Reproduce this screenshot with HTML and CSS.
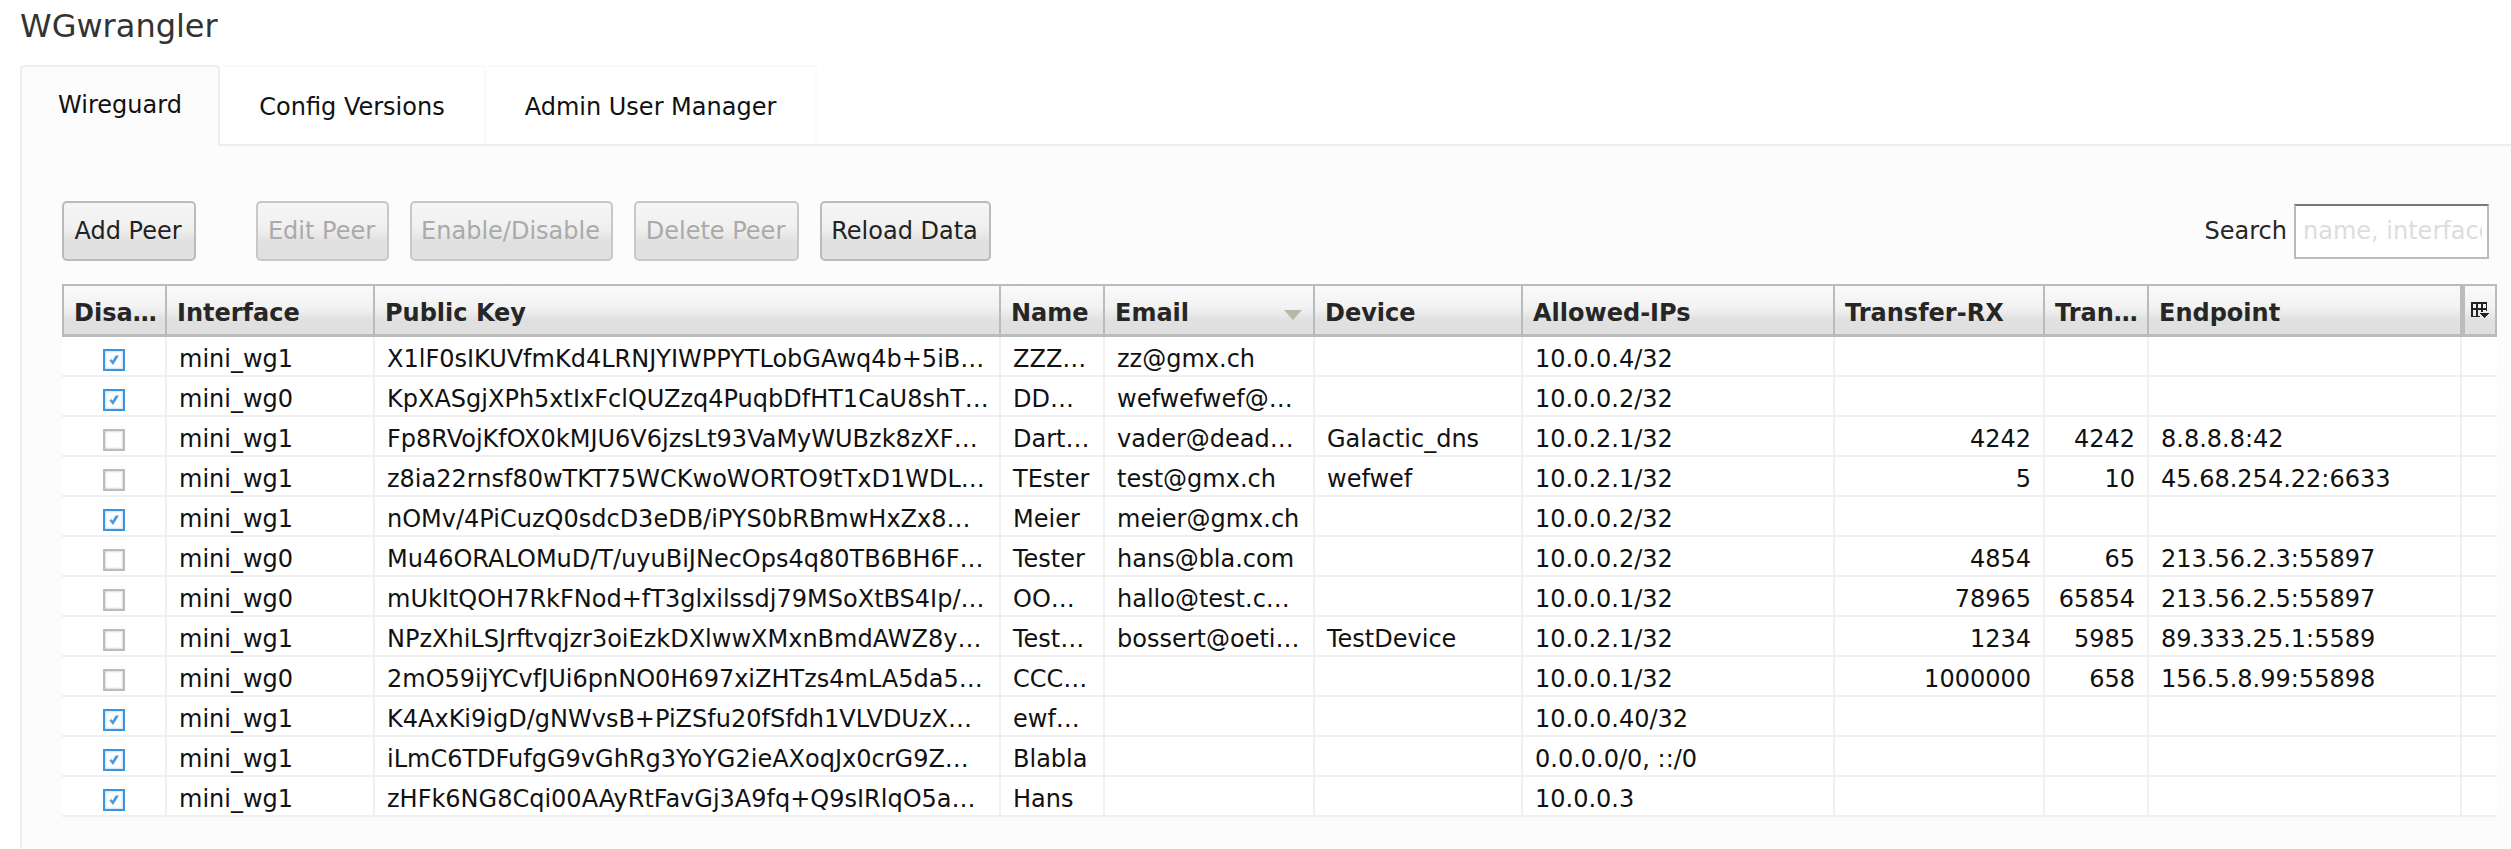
FILE: index.html
```html
<!DOCTYPE html>
<html lang="en">
<head>
  <meta charset="UTF-8">
  <title>WGwrangler</title>
  <link rel="stylesheet" href="styles.css">
</head>
<body>
  <h1 class="title">WGwrangler</h1>

  <div class="tabs">
    <div class="tab active">Wireguard</div>
    <div class="tab tab-config">Config Versions</div>
    <div class="tab tab-admin">Admin User Manager</div>
  </div>

  <div class="panel">
    <div class="toolbar">
      <button class="btn btn-add" type="button">Add Peer</button>
      <button class="btn btn-edit" type="button" disabled>Edit Peer</button>
      <button class="btn btn-enable" type="button" disabled>Enable/Disable</button>
      <button class="btn btn-delete" type="button" disabled>Delete Peer</button>
      <button class="btn btn-reload" type="button">Reload Data</button>
      <div class="search">
        <label for="search">Search</label>
        <input id="search" type="text" placeholder="name, interface">
      </div>
    </div>

    <svg class="defs" width="0" height="0">
      <symbol id="check" viewBox="0 0 14 14">
        <path d="M2.5 7.5 L6 12 L12 2.5 L8.6 2.5 L5.6 7.6 L4.2 6 Z"/>
      </symbol>
    </svg>

    <table class="grid">
      <colgroup>
        <col class="c-dis"><col class="c-if"><col class="c-key"><col class="c-name"><col class="c-mail"><col class="c-dev"><col class="c-ips"><col class="c-rx"><col class="c-tx"><col class="c-end"><col class="c-menu">
      </colgroup>
      <thead>
        <tr>
          <th>Disa…</th>
          <th>Interface</th>
          <th>Public Key</th>
          <th>Name</th>
          <th class="sorted">Email<span class="sort-arrow"></span></th>
          <th>Device</th>
          <th>Allowed-IPs</th>
          <th>Transfer-RX</th>
          <th>Tran…</th>
          <th>Endpoint</th>
          <th class="menu">
            <svg width="18" height="17" viewBox="0 0 18 17" fill="none" stroke="#222" stroke-width="1.5" shape-rendering="crispEdges">
              <path d="M1 1 H16 M1 0 V15 M1 14.5 H9 M1 7 H16 M6 1 V14 M11 1 V10 M15.5 1 V9"/>
              <path d="M9 11 H18 L13.5 16 Z" fill="#222" stroke="none"/>
            </svg>
          </th>
        </tr>
      </thead>
      <tbody>
        <tr><td class="mid"><span class="cb on"><svg><use href="#check"/></svg></span></td><td>mini_wg1</td><td>X1lF0sIKUVfmKd4LRNJYIWPPYTLobGAwq4b+5iB…</td><td>ZZZ…</td><td>zz@gmx.ch</td><td></td><td>10.0.0.4/32</td><td class="num"></td><td class="num"></td><td></td><td></td></tr>
        <tr><td class="mid"><span class="cb on"><svg><use href="#check"/></svg></span></td><td>mini_wg0</td><td>KpXASgjXPh5xtIxFclQUZzq4PuqbDfHT1CaU8shT…</td><td>DD…</td><td>wefwefwef@…</td><td></td><td>10.0.0.2/32</td><td class="num"></td><td class="num"></td><td></td><td></td></tr>
        <tr><td class="mid"><span class="cb"></span></td><td>mini_wg1</td><td>Fp8RVojKfOX0kMJU6V6jzsLt93VaMyWUBzk8zXF…</td><td>Dart…</td><td>vader@dead…</td><td>Galactic_dns</td><td>10.0.2.1/32</td><td class="num">4242</td><td class="num">4242</td><td>8.8.8.8:42</td><td></td></tr>
        <tr><td class="mid"><span class="cb"></span></td><td>mini_wg1</td><td>z8ia22rnsf80wTKT75WCKwoWORTO9tTxD1WDL…</td><td>TEster</td><td>test@gmx.ch</td><td>wefwef</td><td>10.0.2.1/32</td><td class="num">5</td><td class="num">10</td><td>45.68.254.22:6633</td><td></td></tr>
        <tr><td class="mid"><span class="cb on"><svg><use href="#check"/></svg></span></td><td>mini_wg1</td><td>nOMv/4PiCuzQ0sdcD3eDB/iPYS0bRBmwHxZx8…</td><td>Meier</td><td>meier@gmx.ch</td><td></td><td>10.0.0.2/32</td><td class="num"></td><td class="num"></td><td></td><td></td></tr>
        <tr><td class="mid"><span class="cb"></span></td><td>mini_wg0</td><td>Mu46ORALOMuD/T/uyuBiJNecOps4q80TB6BH6F…</td><td>Tester</td><td>hans@bla.com</td><td></td><td>10.0.0.2/32</td><td class="num">4854</td><td class="num">65</td><td>213.56.2.3:55897</td><td></td></tr>
        <tr><td class="mid"><span class="cb"></span></td><td>mini_wg0</td><td>mUkItQOH7RkFNod+fT3glxilssdj79MSoXtBS4Ip/…</td><td>OO…</td><td>hallo@test.c…</td><td></td><td>10.0.0.1/32</td><td class="num">78965</td><td class="num">65854</td><td>213.56.2.5:55897</td><td></td></tr>
        <tr><td class="mid"><span class="cb"></span></td><td>mini_wg1</td><td>NPzXhiLSJrftvqjzr3oiEzkDXlwwXMxnBmdAWZ8y…</td><td>Test…</td><td>bossert@oeti…</td><td>TestDevice</td><td>10.0.2.1/32</td><td class="num">1234</td><td class="num">5985</td><td>89.333.25.1:5589</td><td></td></tr>
        <tr><td class="mid"><span class="cb"></span></td><td>mini_wg0</td><td>2mO59ijYCvfJUi6pnNO0H697xiZHTzs4mLA5da5…</td><td>CCC…</td><td></td><td></td><td>10.0.0.1/32</td><td class="num">1000000</td><td class="num">658</td><td>156.5.8.99:55898</td><td></td></tr>
        <tr><td class="mid"><span class="cb on"><svg><use href="#check"/></svg></span></td><td>mini_wg1</td><td>K4AxKi9igD/gNWvsB+PiZSfu20fSfdh1VLVDUzX…</td><td>ewf…</td><td></td><td></td><td>10.0.0.40/32</td><td class="num"></td><td class="num"></td><td></td><td></td></tr>
        <tr><td class="mid"><span class="cb on"><svg><use href="#check"/></svg></span></td><td>mini_wg1</td><td>iLmC6TDFufgG9vGhRg3YoYG2ieAXoqJx0crG9Z…</td><td>Blabla</td><td></td><td></td><td>0.0.0.0/0, ::/0</td><td class="num"></td><td class="num"></td><td></td><td></td></tr>
        <tr><td class="mid"><span class="cb on"><svg><use href="#check"/></svg></span></td><td>mini_wg1</td><td>zHFk6NG8Cqi00AAyRtFavGj3A9fq+Q9sIRlqO5a…</td><td>Hans</td><td></td><td></td><td>10.0.0.3</td><td class="num"></td><td class="num"></td><td></td><td></td></tr>
      </tbody>
    </table>
  </div>
</body>
</html>
```

FILE: styles.css
```css
html, body {
  height: 100%;
}
body {
  margin: 0;
  padding: 0 0 0 20px;
  box-sizing: border-box;
  height: 849px;
  overflow: hidden;
  display: flex;
  flex-direction: column;
  background-color: #fff;
  color: #111;
  font-family: "DejaVu Sans", sans-serif;
  font-size: 24px;
}
.title {
  margin: 0;
  height: 65px;
  line-height: 52px;
  font-size: 32px;
  font-weight: normal;
  color: #333;
}

/* tabs */
.tabs {
  display: flex;
  height: 81px;
  box-sizing: border-box;
  border-bottom: 2px solid #eee;
}
.tab {
  box-sizing: border-box;
  height: 79px;
  line-height: 81px;
  text-align: center;
  border: 2px solid #fafafa;
  border-left: 0;
  border-bottom: 0;
  border-radius: 4px 4px 0 0;
}
.tab.active {
  width: 200px;
  height: 81px;
  line-height: 77px;
  background-color: #fcfcfc;
  border: 2px solid #eee;
  border-bottom: 0;
  position: relative;
  z-index: 1;
}
.tab-config {
  width: 266px;
}
.tab-admin {
  width: 331px;
}

/* main panel */
.panel {
  flex: 1;
  padding: 55px 14px 0 40px;
  background-color: #fcfcfc;
  border-left: 2px solid #eee;
}
.defs {
  display: block;
  height: 0;
}
.toolbar {
  display: flex;
  align-items: center;
  height: 60px;
  margin-bottom: 23px;
}
.btn {
  box-sizing: border-box;
  height: 60px;
  margin: 0 21px 0 0;
  padding: 0 2px 0 0;
  border: 2px solid #bbb;
  border-radius: 5px;
  background: linear-gradient(#f6f6f6, #f0f0f0 45%, #e0e0e0 70%, #e0e0e0);
  color: #222;
  font-family: inherit;
  font-size: inherit;
}
.btn:disabled {
  color: #aaa;
  border-color: #c8c8c8;
}
.btn-add {
  width: 134px;
  margin-right: 60px;
}
.btn-edit {
  width: 133px;
}
.btn-enable {
  width: 203px;
}
.btn-delete {
  width: 165px;
}
.btn-reload {
  width: 171px;
  margin-right: 0;
}
.search {
  margin-left: auto;
  margin-right: 8px;
  display: flex;
  align-items: center;
  gap: 7px;
  color: #262626;
}
.search input {
  box-sizing: border-box;
  width: 195px;
  height: 55px;
  padding: 0 5px 0 7px;
  background-color: #fff;
  border: 2px solid #bbb;
  border-top-color: #777;
  border-radius: 0;
  font-family: inherit;
  font-size: inherit;
  outline: none;
}
.search input::placeholder {
  color: #ddd;
  opacity: 1;
}

/* peers table */
.grid {
  width: 2435px;
  table-layout: fixed;
  border-collapse: separate;
  border-spacing: 0;
  background-color: #fff;
}
.c-dis { width: 105px; }
.c-if { width: 208px; }
.c-key { width: 626px; }
.c-name { width: 104px; }
.c-mail { width: 210px; }
.c-dev { width: 208px; }
.c-ips { width: 312px; }
.c-rx { width: 210px; }
.c-tx { width: 104px; }
.c-end { width: 313px; }
.c-menu { width: 35px; }
.grid th {
  box-sizing: border-box;
  height: 53px;
  padding: 6px 0 0 10px;
  text-align: left;
  white-space: nowrap;
  overflow: hidden;
  color: #262626;
  border-top: 2px solid #bbb;
  border-bottom: 3px solid #bbb;
  border-right: 2px solid #bbb;
  background: linear-gradient(#fafafa, #f2f2f2 45%, #e0e0e0 72%, #e0e0e0);
}
.grid th:first-child {
  border-left: 2px solid #bbb;
}
.grid th.sorted {
  position: relative;
}
.sort-arrow {
  position: absolute;
  right: 11px;
  top: 24px;
  width: 0;
  height: 0;
  border-left: 9px solid transparent;
  border-right: 9px solid transparent;
  border-top: 10px solid #b8b8a8;
}
.grid th.menu {
  padding: 0;
  border-left: 3px solid #bbb;
  text-align: center;
}
.menu svg {
  display: block;
  margin: 0 0 0 6px;
}
.grid td {
  box-sizing: border-box;
  height: 40px;
  padding: 6px 8px 0 12px;
  white-space: nowrap;
  overflow: hidden;
  border-bottom: 2px solid #f0f0f0;
  border-right: 2px solid #f0f0f0;
}
.grid td:last-child {
  border-right: 0;
}
.grid td.mid {
  padding: 5px 0 0;
  text-align: center;
}
.grid td.num {
  padding: 6px 12px 0 0;
  text-align: right;
}

/* checkbox cell */
.cb {
  display: inline-block;
  vertical-align: middle;
  box-sizing: border-box;
  width: 22px;
  height: 22px;
  border: 2px solid #bbb;
  background-color: #fff;
  box-shadow: inset 0 0 2px 1px #ddd;
}
.cb.on {
  border-color: #3d94e0;
  box-shadow: inset 0 0 2px 1px #cfe3f7;
}
.cb svg {
  display: block;
  width: 14px;
  height: 14px;
  margin: 2px;
  fill: #4a9ae6;
}
```
